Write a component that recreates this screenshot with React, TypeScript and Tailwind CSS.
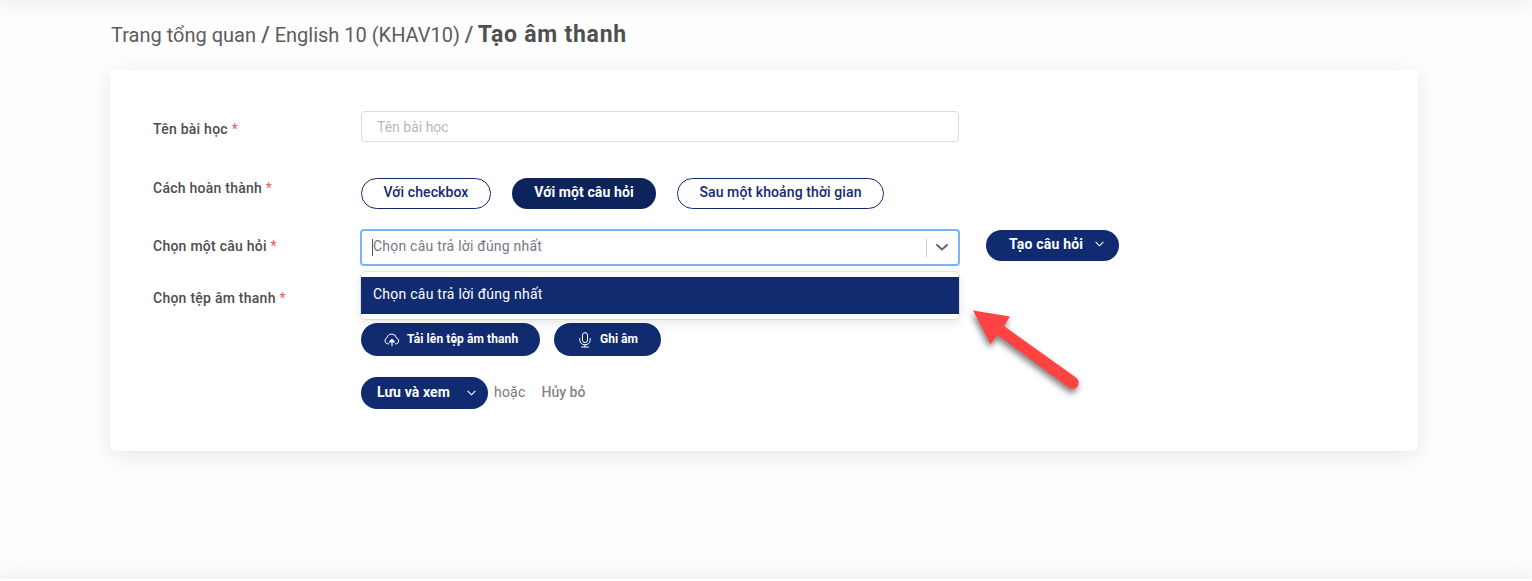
import React from 'react';

function Chevron({ className }: { className: string }) {
  return (
    <svg viewBox="0 0 10 6" fill="none" stroke="currentColor" className={className}>
      <path d="M1 1l4 4 4-4" strokeWidth="1.2" strokeLinecap="round" strokeLinejoin="round" />
    </svg>
  );
}

function Label({ children, className }: { children: React.ReactNode; className: string }) {
  return (
    <div className={`w-[208px] shrink-0 whitespace-nowrap text-sm leading-5 font-medium tracking-[0.25px] text-[#4d4d4d] ${className}`}>
      {children} <span className="font-normal text-[#f05a5a]">*</span>
    </div>
  );
}

function CloudUpload() {
  return (
    <svg viewBox="0 0 16 14" fill="none" stroke="currentColor" className="h-[14px] w-4 shrink-0">
      <path d="M4.8 10.8H3.7A3.1 3.1 0 0 1 3 4.8 4.9 4.9 0 0 1 12.6 5.2 2.9 2.9 0 0 1 12.5 10.8H11.4" strokeWidth="1" strokeLinecap="round" />
      <path d="M8 13.2V7M5.5 8.9L8 6.3l2.5 2.600z" fill="currentColor" strokeWidth="1.1" strokeLinejoin="round" />
    </svg>
  );
}

function Mic() {
  return (
    <svg viewBox="0 0 12 16" fill="none" stroke="currentColor" strokeLinecap="round" className="h-4 w-3 shrink-0">
      <rect x="3.5" y="0.6" width="5" height="10" rx="2.5" />
      <path d="M0.8 6.5v1.7a5.2 4.6 0 0 0 10.4 0V6.5M6 12.8v2.200M2.500 15h7" />
    </svg>
  );
}

export default function App() {
  return (
    <div className="relative h-[581px] w-full overflow-hidden bg-[#fefefe] font-['Roboto',sans-serif]">
      <div className="absolute inset-x-0 -top-5 h-5 shadow-[0_0_25px_5px_rgba(0,0,0,0.07)]" />
      <div className="absolute inset-x-0 top-[579px] h-5 bg-white shadow-[0_0_25px_5px_rgba(0,0,0,0.07)]" />

      <nav className="flex h-[70px] items-baseline whitespace-pre pt-5 pl-[111px] text-xl leading-[30px] text-[#5c5c5c]">
        <span>Trang tổng quan</span>
        <span className="text-[22px] font-medium tracking-[-0.3px]"> / </span>
        <span>English 10 (KHAV10)</span>
        <span className="text-[22px] font-medium tracking-[-0.6px]"> / </span>
        <span className="text-[23px] font-bold tracking-[0.75px] text-[#505050]">Tạo âm thanh</span>
      </nav>

      <main className="ml-[110px] h-[381px] w-[1308px] rounded-md bg-white pt-[41px] pl-[43px] shadow-[0_4px_25px_rgba(0,0,0,0.1)]">
        <div className="flex h-[67px]">
          <Label className="pt-2">Tên bài học</Label>
          <input
            placeholder="Tên bài học"
            className="h-[31px] w-[598px] rounded border border-[#dcdce0] bg-white px-[15px] text-sm text-[#555] outline-none placeholder:text-[#b8b8be]"
          />
        </div>

        <div className="flex h-[51px] text-sm">
          <Label className="pt-0">Cách hoàn thành</Label>
          <button className="mr-[21px] h-[31px] w-[130px] rounded-full border border-[#112b71] pb-1 font-medium tracking-[0.1px] text-[#112b71]">Với checkbox</button>
          <button className="mr-[21px] h-[31px] w-[144px] rounded-full bg-[#0d235c] pb-1 font-bold tracking-[0.1px] text-white">Với một câu hỏi</button>
          <button className="h-[31px] w-[207px] rounded-full border border-[#112b71] pb-1 font-medium tracking-[0.1px] text-[#112b71]">Sau một khoảng thời gian</button>
        </div>

        <div className="flex h-[54px]">
          <Label className="pt-[7px]">Chọn một câu hỏi</Label>
          <div className="relative -ml-px h-[37px] w-[600px]">
            <div className="flex h-full items-center rounded border-2 border-[#7eb1fa] bg-white pl-[10px] text-sm text-[#777783]">
              <span className="-mr-px h-[17px] w-px bg-[#555]" />
              <span className="flex-1 pb-[3px] pl-px tracking-[0.22px]">Chọn câu trả lời đúng nhất</span>
              <span className="h-[18px] w-px bg-[#ccc]" />
              <svg viewBox="0 0 12 8" fill="none" className="mr-[10px] ml-[9px] h-2 w-3">
                <path d="M1 1l5 4.6 5-4.6" stroke="#666674" strokeWidth="2" strokeLinecap="round" strokeLinejoin="round" />
              </svg>
            </div>
            <ul className="absolute top-[43px] left-px z-10 w-[598px] rounded bg-white py-[5px] shadow-[0_0_0_1px_rgba(0,0,0,0.08),0_4px_11px_rgba(0,0,0,0.1)]">
              <li className="h-[37px] bg-[#112b71] pl-3 text-sm leading-[35px] tracking-[0.24px] text-white">Chọn câu trả lời đúng nhất</li>
            </ul>
          </div>
          <button className="mt-px ml-[26px] flex h-[31px] w-[133px] items-center rounded-full bg-[#112b71] pb-[3px] pl-[23px] text-sm font-bold tracking-[0.2px] text-white">
            Tạo câu hỏi
            <Chevron className="ml-3 h-[6px] w-[9px]" />
          </button>
        </div>

        <div className="flex h-[94px]">
          <Label className="pt-[5px]">Chọn tệp âm thanh</Label>
          <div className="flex h-[33px] translate-y-10 gap-[14px] text-xs font-bold text-white">
            <button className="flex h-[33px] w-[179px] items-center gap-[7px] rounded-full bg-[#112b71] pl-[23px]">
              <CloudUpload />
              <span className="pb-px tracking-[0.1px]">Tải lên tệp âm thanh</span>
            </button>
            <button className="flex h-[33px] w-[107px] items-center gap-[9px] rounded-full bg-[#112b71] pl-[25px]">
              <Mic />
              <span className="pb-0.5">Ghi âm</span>
            </button>
          </div>
        </div>

        <div className="flex items-center pl-[208px] text-sm text-[#777]">
          <div className="flex h-8 w-[127px] items-center rounded-full bg-[#112b71] pb-[3px] pl-4 font-bold tracking-[0.1px] text-white">
            <span>Lưu và xem</span>
            <Chevron className="mt-[3px] ml-[17px] h-[6px] w-[9px]" />
          </div>
          <span className="ml-[6px] pb-0.5 tracking-[0.2px]">hoặc</span>
          <a className="ml-[16px] pb-0.5 font-medium text-[#858585]">Hủy bỏ</a>
        </div>
      </main>

      <svg viewBox="0 0 130 110" className="absolute top-[300px] left-[964px] z-20 h-[110px] w-[130px] drop-shadow-[-1px_4px_3px_rgba(0,0,0,0.5)]">
        <path d="M9 10.500L46 16.500l-6 9.500 72 51.500a6 6 0 0 1-7 10.300L33.500 35l-7 9z" fill="#ff4343" />
      </svg>
    </div>
  );
}
